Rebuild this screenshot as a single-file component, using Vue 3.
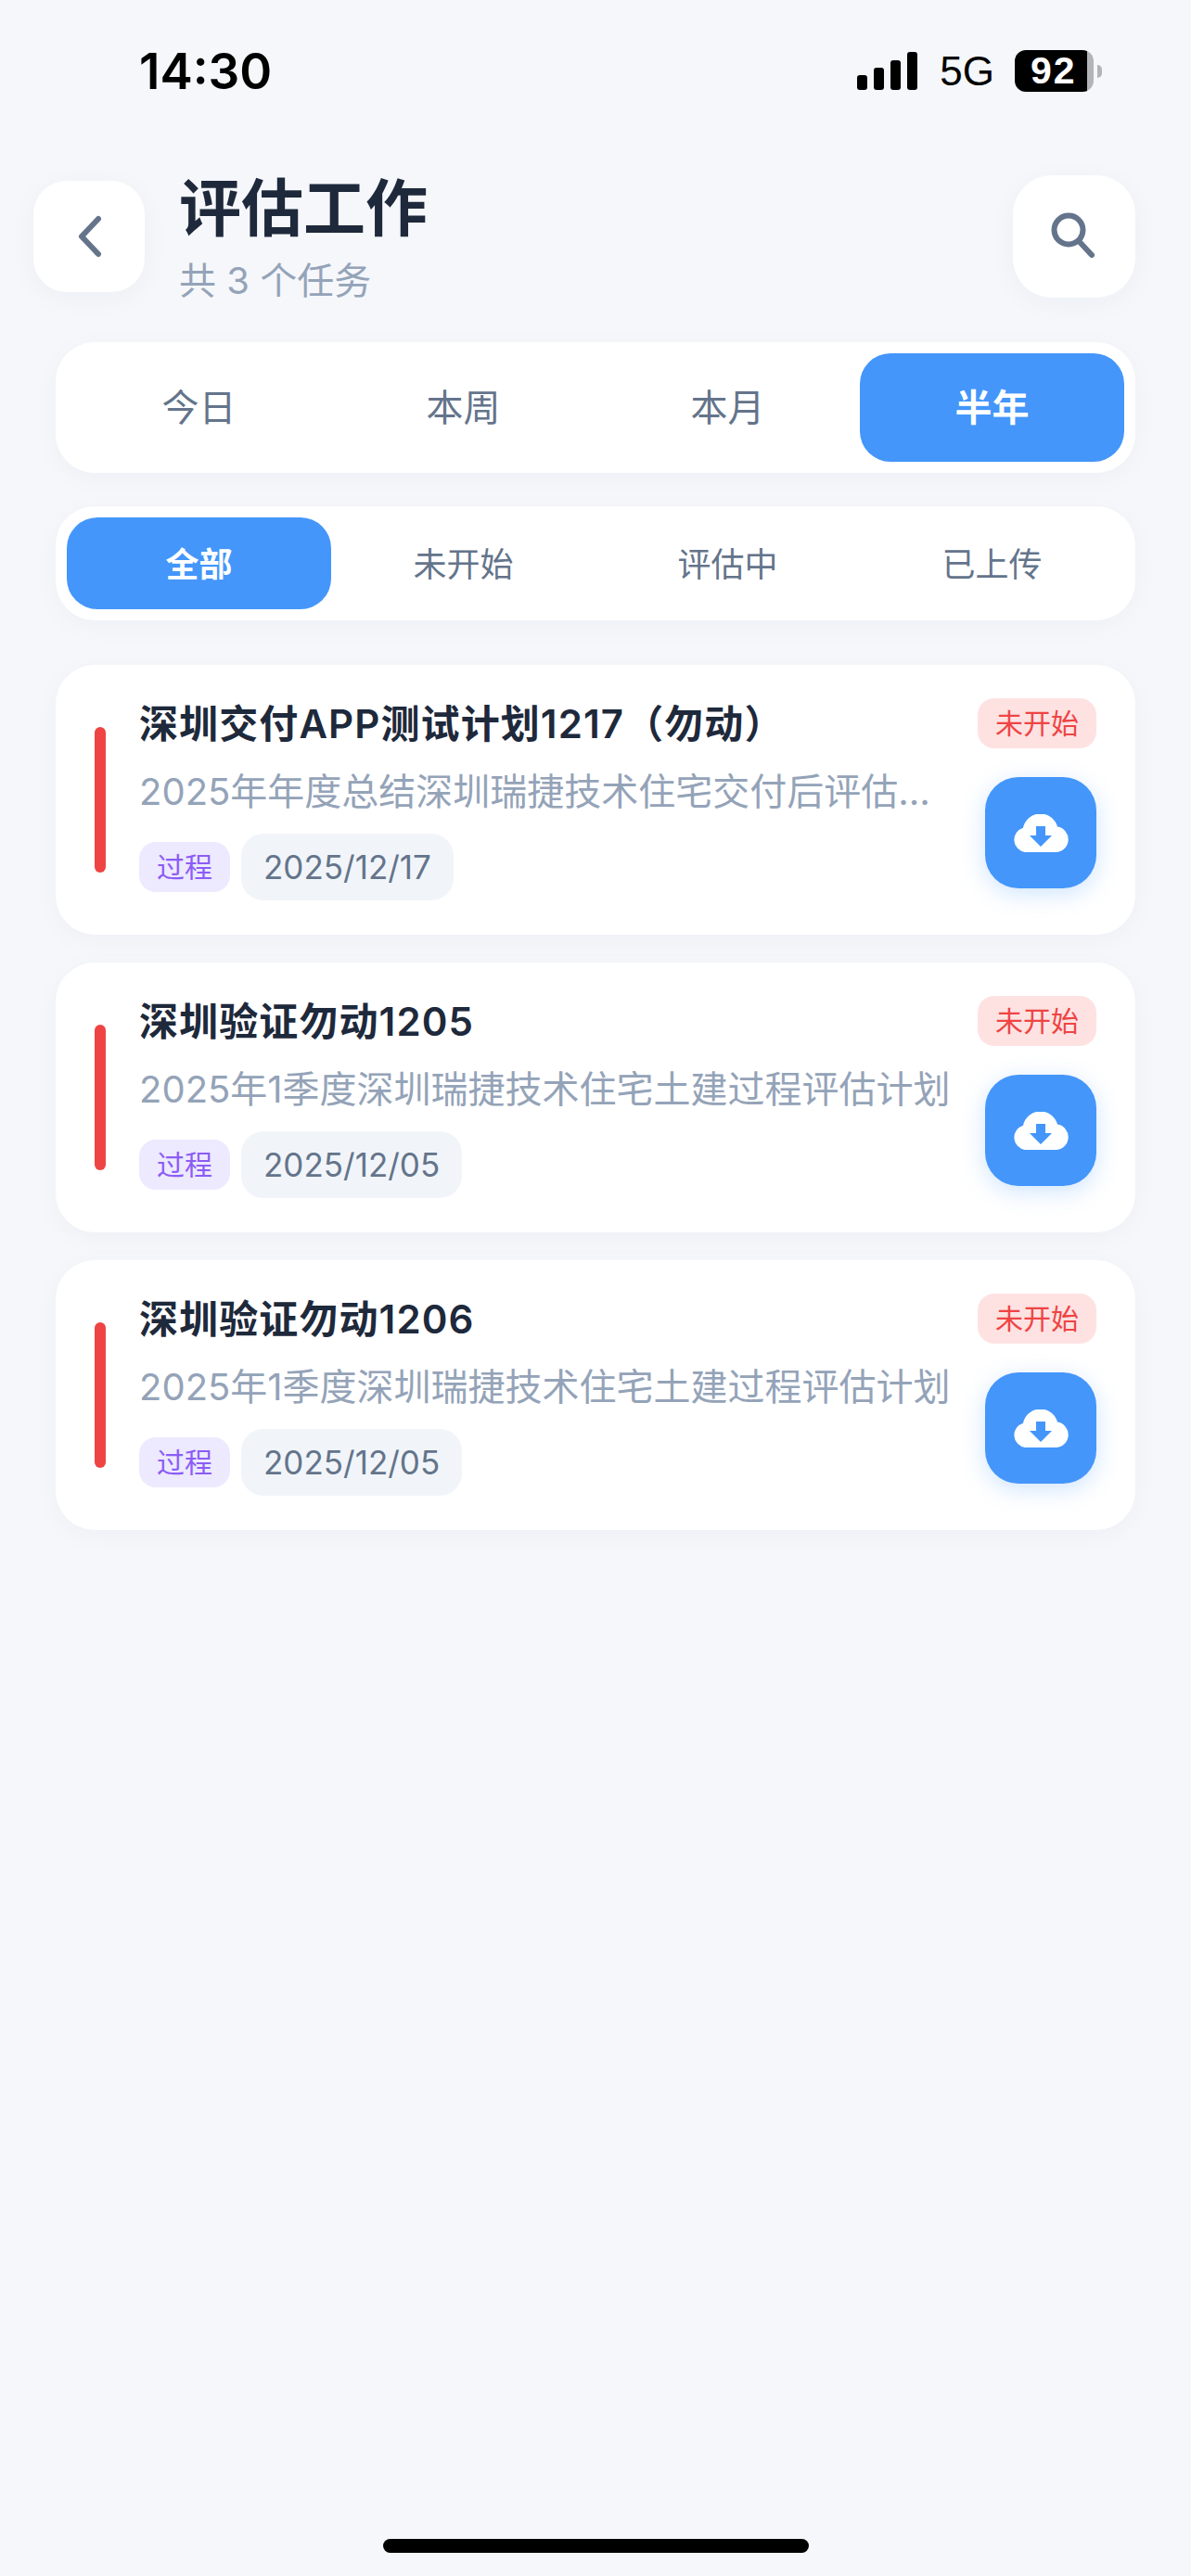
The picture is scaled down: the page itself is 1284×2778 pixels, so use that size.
<template>
  <div class="page">
    <!-- 狀態欄 -->
    <div class="status">
      <span class="time">14:30</span>
      <div class="status-right">
        <div class="signal">
          <i v-for="h in [16, 24, 32, 41]" :key="h" :style="{ height: h + 'px' }"></i>
        </div>
        <span class="net">5G</span>
        <div class="battery"><span>92</span></div>
        <div class="nub"></div>
      </div>
    </div>

    <div class="header">
      <button class="back">
        <svg width="36" height="54" viewBox="0 0 36 54">
          <path d="M28 8 L10 27 L28 46" fill="none" stroke="#64748b" stroke-width="6" stroke-linecap="round" stroke-linejoin="round" />
        </svg>
      </button>
      <div class="head-text">
        <div class="title">评估工作</div>
        <div class="sub">共 3 个任务</div>
      </div>
      <button class="search">
        <svg width="54" height="54" viewBox="0 0 54 54">
          <circle cx="21" cy="20" r="15.5" fill="none" stroke="#64748b" stroke-width="6" />
          <path d="M33 33 L46 47" fill="none" stroke="#64748b" stroke-width="6" stroke-linecap="round" />
        </svg>
      </button>
    </div>

    <div class="tabs period">
      <div v-for="t in periods" :key="t" class="tab" :class="{ on: t === period }">{{ t }}</div>
    </div>
    <div class="tabs state">
      <div v-for="t in states" :key="t" class="tab" :class="{ on: t === state }">{{ t }}</div>
    </div>

    <div class="list">
      <div v-for="item in tasks" :key="item.name" class="card">
        <div class="bar"></div>
        <div class="main">
          <div class="name">{{ item.name }}</div>
          <div class="desc">{{ item.desc }}</div>
          <div class="tags">
            <span class="kind">过程</span>
            <span class="date">{{ item.date }}</span>
          </div>
        </div>
        <div class="side">
          <span class="badge">未开始</span>
          <button class="down">
            <svg width="60" height="41" viewBox="0 0 60 41">
              <path fill="#fff" d="M13 41 A13.5 13.5 0 0 1 11 14.7 A19 19 0 0 1 48 13.6 A13.8 13.8 0 0 1 47 41 Z" />
              <path fill="#4496fa" d="M25 13 H35 V23 H42 L30 35 L18 23 H25 Z" />
            </svg>
          </button>
        </div>
      </div>
    </div>

    <div class="home"></div>
  </div>
</template>

<script setup>
import { ref } from 'vue'

const periods = ['今日', '本周', '本月', '半年']
const states = ['全部', '未开始', '评估中', '已上传']
const period = ref('半年')
const state = ref('全部')

const tasks = [
  { name: '深圳交付APP测试计划1217（勿动）', desc: '2025年年度总结深圳瑞捷技术住宅交付后评估计划', date: '2025/12/17' },
  { name: '深圳验证勿动1205', desc: '2025年1季度深圳瑞捷技术住宅土建过程评估计划', date: '2025/12/05' },
  { name: '深圳验证勿动1206', desc: '2025年1季度深圳瑞捷技术住宅土建过程评估计划', date: '2025/12/05' },
]
</script>

<style>
body {
  background: #f5f7fb;
}
</style>

<style scoped>
.page {
  position: relative;
  width: 1284px;
  height: 2778px;
  background: #f5f7fb;
  font-family: Inter, "Noto Sans CJK SC", sans-serif;
  overflow: hidden;
}

.status {
  padding: 54px 96px 0 150px;
  display: flex;
  justify-content: space-between;
  align-items: center;
  height: 45px;
}
.time {
  font-size: 53px;
  font-weight: 600;
  color: #000;
}
.status-right {
  display: flex;
  align-items: center;
}
.signal {
  display: flex;
  align-items: flex-end;
  gap: 7px;
  margin-right: 24px;
}
.signal i {
  display: block;
  width: 11px;
  background: #000;
  border-radius: 3px;
}
.net {
  font-family: "Liberation Sans", sans-serif;
  font-size: 44px;
  margin-right: 22px;
  color: #000;
}
.battery {
  width: 85px;
  height: 45px;
  box-sizing: border-box;
  border-radius: 12px;
  background: linear-gradient(to right, #000 92%, #b4b4b6 92%);
  display: flex;
  align-items: center;
  padding-left: 17px;
}
.battery span {
  font-family: "Liberation Sans", sans-serif;
  font-size: 41px;
  font-weight: 700;
  color: #fff;
  letter-spacing: 2px;
}
.nub {
  width: 5px;
  height: 14px;
  margin-left: 4px;
  background: #b4b4b6;
  border-radius: 0 7px 7px 0;
}

.header {
  display: flex;
  align-items: center;
  padding: 0 60px 0 36px;
  margin-top: 90px;
  height: 132px;
}
.back,
.search {
  border: none;
  padding: 0;
  background: #fff;
  display: flex;
  align-items: center;
  justify-content: center;
  box-shadow: 0 6px 30px rgba(30, 41, 59, 0.04);
  flex-shrink: 0;
}
.back {
  width: 120px;
  height: 120px;
  border-radius: 36px;
}
.search {
  width: 132px;
  height: 132px;
  border-radius: 42px;
  margin-left: auto;
}
.head-text {
  margin-left: 37px;
  margin-top: 6px;
}
.title {
  font-size: 67px;
  line-height: 76px;
  font-weight: 700;
  color: #1e293b;
}
.sub {
  font-size: 40px;
  line-height: 52px;
  color: #94a3b8;
  margin-top: 14px;
}

.tabs {
  margin: 0 60px;
  padding: 12px;
  background: #fff;
  display: grid;
  grid-template-columns: repeat(4, 1fr);
  box-shadow: 0 6px 30px rgba(30, 41, 59, 0.03);
  border-radius: 42px;
}
.period {
  margin-top: 48px;
  height: 141px;
  box-sizing: border-box;
}
.state {
  margin-top: 36px;
  height: 123px;
  box-sizing: border-box;
}
.tab {
  display: flex;
  align-items: center;
  justify-content: center;
  font-size: 40px;
  color: #64748b;
  border-radius: 33px;
  padding-bottom: 5px;
}
.state .tab {
  font-size: 36px;
  padding-bottom: 3px;
}
.tab.on {
  background: #4496fa;
  color: #fff;
  font-weight: 700;
}

.list {
  margin: 48px 60px 0;
  display: flex;
  flex-direction: column;
  gap: 30px;
}
.card {
  height: 291px;
  box-sizing: border-box;
  background: #fff;
  border-radius: 42px;
  box-shadow: 0 6px 30px rgba(30, 41, 59, 0.03);
  display: flex;
  align-items: flex-start;
  padding: 36px 42px 36px 42px;
}
.bar {
  width: 12px;
  height: 157px;
  margin-top: 31px;
  border-radius: 6px;
  background: #ef4444;
  flex-shrink: 0;
}
.main {
  flex: 1;
  min-width: 0;
  margin-left: 36px;
}
.name {
  font-size: 42px;
  line-height: 56px;
  font-weight: 600;
  letter-spacing: 1.1px;
  color: #1e293b;
}
.desc {
  font-size: 40px;
  line-height: 54px;
  margin-top: 18px;
  color: #94a3b8;
  white-space: nowrap;
  overflow: hidden;
  text-overflow: ellipsis;
}
.tags {
  display: flex;
  align-items: center;
  gap: 12px;
  margin-top: 18px;
}
.kind {
  padding: 0 19px;
  height: 54px;
  line-height: 54px;
  font-size: 30px;
  color: #8b5cf6;
  background: #ede9fe;
  border-radius: 18px;
}
.date {
  padding: 0 24px;
  height: 72px;
  line-height: 72px;
  font-size: 35px;
  color: #64748b;
  background: #f1f5f9;
  border-radius: 24px;
}
.side {
  width: 128px;
  flex-shrink: 0;
  margin-left: 24px;
  display: flex;
  flex-direction: column;
  align-items: flex-end;
}
.badge {
  height: 54px;
  line-height: 54px;
  padding: 0 19px;
  font-size: 30px;
  color: #ef4444;
  background: #fee2e2;
  border-radius: 18px;
  white-space: nowrap;
}
.down {
  width: 120px;
  height: 120px;
  border: none;
  padding: 0;
  margin-top: 31px;
  border-radius: 36px;
  background: #4496fa;
  box-shadow: 0 6px 24px rgba(68, 150, 250, 0.25);
  display: flex;
  align-items: center;
  justify-content: center;
}

.home {
  position: absolute;
  left: 413px;
  bottom: 25px;
  width: 459px;
  height: 15px;
  border-radius: 8px;
  background: #000;
}
</style>
